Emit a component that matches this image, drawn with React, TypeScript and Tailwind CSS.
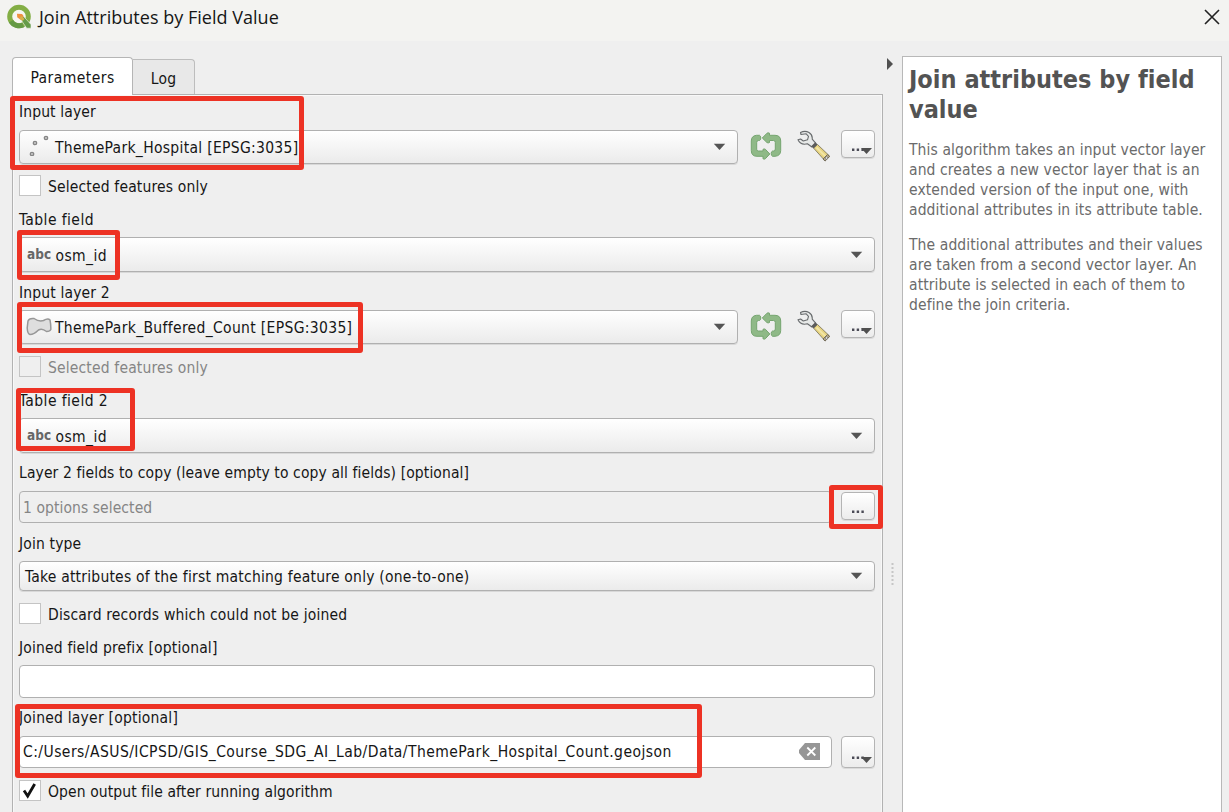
import type { ReactNode } from "react";

const FONT = "font-['DejaVu_Sans_Condensed','DejaVu_Sans',sans-serif] [font-stretch:condensed]";

function Label({ children, className = "" }: { children: ReactNode; className?: string }) {
  return (
    <div className={`flex h-5 shrink-0 items-center ${className}`}>
      <span className="mt-px">{children}</span>
    </div>
  );
}

function Arrow() {
  return (
    <svg width="13" height="8" viewBox="0 0 13 8" className="shrink-0">
      <path d="M.8.8h11.4L6.5 7Z" fill="#555" />
    </svg>
  );
}

function Combo({ children, className = "" }: { children: ReactNode; className?: string }) {
  return (
    <div className={`flex shrink-0 items-center justify-between rounded-[4px] border border-[#b0b0b0] bg-linear-to-b from-white to-[#ebebeb] pr-[11px] shadow-[0_1px_0_#d8d8d8] ${className}`}>
      <div className="flex items-center">{children}</div>
      <Arrow />
    </div>
  );
}

function Check({ text, checked, disabled, className = "" }: { text: string; checked?: boolean; disabled?: boolean; className?: string }) {
  return (
    <div className={`flex h-[21px] shrink-0 items-center gap-[7.5px] ${disabled ? "text-[#858585]" : ""} ${className}`}>
      <span className={`flex h-[21px] w-[21.5px] items-center justify-center border-[1.5px] border-[#c4c4c4] ${disabled ? "bg-[#efefef]" : "bg-white"}`}>
        {checked && (
          <svg width="15" height="17" viewBox="0 0 15 17">
            <path d="M2 8.5 5.7 14 12.7 2" fill="none" stroke="#111" strokeWidth="2.8" />
          </svg>
        )}
      </span>
      <span className="mt-[2px]">{text}</span>
    </div>
  );
}

function IterateIcon() {
  return (
    <svg width="32" height="28" viewBox="0 0 32 28">
      <g fill="#8fb987" stroke="#76a570" strokeLinejoin="round">
        <path d="M9.500 3.300H6.500Q1.300 3.800 1.300 9V18.500Q1.300 24.300 7 24.300H13V26.800Q14.500 27.500 15.400 26.700L19.800 22L15.400 17.300Q14.300 16.500 13 17.300V19H8.500Q6.700 19 6.700 17.300V10.500Q6.700 8.500 8.500 8.500H9.500Q10.800 8 10.800 6Q10.800 3.800 9.500 3.300Z" />
        <path d="M22.500 24.300H25Q30.700 23.800 30.700 18.500V9Q30.700 3.300 25 3.300H19.500V1.200Q18 .4 17 1.200L12.300 6L17 10.600Q18.200 11.300 19.500 10.500V8.500H23.500Q25.300 8.500 25.300 10.500V17Q25.300 19 23.500 19H22.500Q21.200 19.500 21.200 21.500Q21.200 23.800 22.500 24.300Z" />
      </g>
    </svg>
  );
}

function WrenchIcon() {
  return (
    <svg width="34" height="33" viewBox="0 0 34 33">
      <path d="M16.5 18 20.5 14.500 32.500 26 28 30.800Z" fill="#e8d582" stroke="#8d8568" strokeLinejoin="round" />
      <path d="m19.500 17.500 10 9.800" stroke="#f3e7a8" strokeWidth="1.8" />
      <path d="M26 29 30.500 24.500l2.200 2-4.700 4.600Z" fill="#b5a98a" stroke="#756d5b" />
      <circle cx="29.500" cy="28" r="1.2" fill="#eee" stroke="#666" strokeWidth=".6" />
      <path d="M3.500 2.500Q8 .2 12 2.500q3.800 2.400 3.200 6.600l3.700 4.200-4 3.700-4.500-3.200Q3.500 15.500 1 9.800l2.600-.8 2.700 2 4.200-1.200 1-3.500-2.300-2.500L4 4.500Z" fill="#e7e9e8" stroke="#686b6d" strokeWidth="1.1" strokeLinejoin="round" />
      <path d="m14 16.400 4.300-4.200 2.200 2.200-3.800 3.800Z" fill="#5c5c5c" />
    </svg>
  );
}

function DotsButton({ className = "", arrow = "" }: { className?: string; arrow?: string }) {
  return (
    <div className={`relative flex w-[34px] shrink-0 justify-center rounded-[4px] border border-[#b4b4b4] bg-linear-to-b from-white to-[#ececec] shadow-[0_1px_0_#dadada] ${className}`}>
      <svg width="14" height="4" viewBox="0 0 14 4">
        <path d="M1 .5h2.4v2.4H1zM5.7.5h2.4v2.4H5.7zM10.4.5h2.4v2.4h-2.4z" fill="#4b4b56" />
      </svg>
      {arrow && (
        <svg width="11" height="6" viewBox="0 0 11 6" className={`absolute right-[2px] ${arrow}`}>
          <path d="M0 0h11L5.5 6Z" fill="#505050" />
        </svg>
      )}
    </div>
  );
}

function LayerRow({ children, className = "" }: { children: ReactNode; className?: string }) {
  return (
    <div className={`flex h-[35px] shrink-0 ${className}`}>
      <Combo className="h-[34px] w-[719px]">{children}</Combo>
      <div className="ml-3 mt-[2px] shrink-0"><IterateIcon /></div>
      <div className="ml-[15px] shrink-0"><WrenchIcon /></div>
      <DotsButton className="ml-2.5 h-7 pt-[17px]" arrow="top-[17px]" />
    </div>
  );
}

function FieldCombo({ className = "" }: { className?: string }) {
  return (
    <Combo className={`h-[35px] ${className}`}>
      <span className="ml-[7px] mt-[-2px] w-[28.5px] text-[13.5px] font-bold text-[#666]">abc</span>
      <span className="mt-[2px] tracking-[0.4px]">osm_id</span>
    </Combo>
  );
}

function Marker({ className }: { className: string }) {
  return <div className={`absolute rounded-[3px] border-[5px] border-[#ed3224] ${className}`} />;
}

export default function App() {
  return (
    <div className={`relative flex h-[812px] w-[1229px] flex-col overflow-hidden bg-[#efefef] text-[15.5px] leading-5 text-[#161616] ${FONT}`}>
      <header className="flex h-[41px] shrink-0 items-center bg-[#f3f3f1] pb-[6px] pl-[6px] pr-[8px]">
        <svg width="26" height="26" viewBox="0 0 26 26" className="mt-[-2px]">
          <circle cx="13" cy="12.500" r="9.300" fill="#f6f6f1" stroke="#83ae45" strokeWidth="5" />
          <path d="M5 17.200A9.300 9.300 0 0 0 17 20.900" fill="none" stroke="#659a45" strokeWidth="5" />
          <path d="m14.500 15 3-2.700 7.500 8.200v3.700h-4.300Z" fill="#649b48" stroke="#f3f3f1" strokeWidth=".6" />
          <path d="m11 9.800 5 .3 1.200 1.300.2 4-2.900.4-3.300-2.500Z" fill="#ee913f" />
          <path d="m15.500 12 3 3-2 2-3-3Z" fill="#d8b24a" />
        </svg>
        <h1 className="ml-[7px] mt-[-2px] font-['Open_Sans','Noto_Sans',sans-serif] text-[18px] font-normal [font-stretch:normal] tracking-[0.02px]">Join Attributes by Field Value</h1>
        <svg width="18" height="18" viewBox="0 0 18 18" className="ml-auto mt-[-2px]">
          <path d="m2 2 14 14M16 2 2 16" stroke="#222" strokeWidth="1.6" />
        </svg>
      </header>

      <div className="flex min-h-0 flex-1">
        <main className="ml-3 mt-4 flex w-[871px] shrink-0 flex-col">
          <div className="z-10 flex h-[37px] shrink-0 items-end">
            <div className="mb-[-1px] flex h-[38px] w-[121px] items-center justify-center rounded-t-[4px] border border-b-0 border-[#b5b5b5] bg-white pt-[3px] tracking-[0.45px]">Parameters</div>
            <div className="flex h-[35px] w-[62px] items-center justify-center rounded-tr-[4px] border border-b-0 border-l-0 border-[#bdbdbd] bg-[#e8e8e8] pt-[4px] tracking-[0.2px]">Log</div>
          </div>
          <section className="flex min-h-0 flex-1 flex-col overflow-hidden border-x border-t border-[#b2b2b2] pl-[6px] pr-[7px] pt-[6px] shadow-[inset_1px_1px_0_#f8f8f8,inset_-1px_0_0_#f8f8f8]">
            <Label className="tracking-[0.12px]">Input layer</Label>
            <LayerRow className="mt-[9px]">
              <svg width="22" height="24" viewBox="0 0 22 24" className="ml-[9px] mr-[4px] mt-[-6px]">
                <g fill="#c8c8c8" stroke="#858585" strokeWidth="1.3">
                  <circle cx="6" cy="11" r="1.7" />
                  <circle cx="17" cy="6" r="1.7" />
                  <circle cx="3" cy="22" r="1.7" />
                </g>
              </svg>
              <span className="mt-[2px] tracking-[0.3px]">ThemePark_Hospital [EPSG:3035]</span>
            </LayerRow>
            <Check text="Selected features only" className="mt-[10px] tracking-[0.16px]" />
            <Label className="mt-[13px] tracking-[0.42px]">Table field</Label>
            <FieldCombo className="mt-2" />
            <Label className="mt-[10px] tracking-[0.15px]">Input layer 2</Label>
            <LayerRow className="mt-2">
              <svg width="26" height="19" viewBox="0 0 26 19" className="ml-[6px] mr-[3px] mt-[-2px]">
                <path d="M2 4Q3 1 8 1.500Q13 5 17.500 3.500Q22 .800 24 3Q25 8 24.800 12.500Q24 14.500 20.500 14.500Q16 10.800 12.500 13Q8 17.500 4 17.500Q1.500 17 1.200 11Z" fill="#dedede" stroke="#979797" strokeWidth="1.500" />
              </svg>
              <span className="mt-[2px] tracking-[0.33px]">ThemePark_Buffered_Count [EPSG:3035]</span>
            </LayerRow>
            <Check text="Selected features only" disabled className="mt-[11px] tracking-[0.16px]" />
            <Label className="mt-[13px] tracking-[0.42px]">Table field 2</Label>
            <FieldCombo className="mt-2" />
            <Label className="mt-[9px] tracking-[0.11px]">Layer 2 fields to copy (leave empty to copy all fields) [optional]</Label>
            <div className="mt-[9px] flex h-8 shrink-0 justify-between">
              <div className="flex w-[813px] items-center rounded-[4px] border border-[#b0b0b0] pl-[3px] pt-px tracking-[0.07px] text-[#858585]">1 options selected</div>
              <DotsButton className="mt-px h-7 pt-[17px]" />
            </div>
            <Label className="mt-[10px] tracking-[0.15px]">Join type</Label>
            <Combo className="mt-2 h-[30px] pl-[5px]">
              <span className="mt-px tracking-[0.22px]">Take attributes of the first matching feature only (one-to-one)</span>
            </Combo>
            <Check text="Discard records which could not be joined" className="mt-[12px] tracking-[0.18px]" />
            <Label className="mt-[13px] tracking-[0.17px]">Joined field prefix [optional]</Label>
            <div className="mt-2 h-[33px] shrink-0 rounded-[4px] border border-[#b0b0b0] bg-white" />
            <Label className="mt-[9px] tracking-[0.22px]">Joined layer [optional]</Label>
            <div className="mt-[9px] flex h-8 shrink-0 justify-between">
              <div className="flex w-[813px] items-center justify-between rounded-[4px] border border-[#b0b0b0] bg-white pl-[3px] pr-[11px]">
                <span className="tracking-[0.45px]">C:/Users/ASUS/ICPSD/GIS_Course_SDG_AI_Lab/Data/ThemePark_Hospital_Count.geojson</span>
                <svg width="21" height="17" viewBox="0 0 21 17" className="mt-[-2px]">
                  <path d="M6 0h15v17H6L0 10V7Z" fill="#969696" />
                  <path d="m8.300 4.500 8 8m0-8-8 8" stroke="#fff" strokeWidth="1.800" />
                </svg>
              </div>
              <DotsButton className="h-8 pt-[19px]" arrow="top-[20px]" />
            </div>
            <Check text="Open output file after running algorithm" checked className="mt-[12px] tracking-[0.1px]" />
          </section>
        </main>

        <div className="flex w-[19px] shrink-0 flex-col items-center">
          <svg width="8" height="14" viewBox="0 0 8 14" className="mr-[5px] mt-[16px]">
            <path d="M1 1v12l6-6Z" fill="#505050" />
          </svg>
          <svg width="3" height="22" viewBox="0 0 3 22" className="mt-[492px]">
            <path d="M1.500 0v22" stroke="#c6c6c6" strokeWidth="2" strokeDasharray="2 2" />
          </svg>
        </div>

        <aside className="mt-[15px] w-80 shrink-0 border border-b-0 border-[#b8b8b8] bg-white pl-[6px] pt-[8px] text-[#6b6b6b]">
          <h2 className="text-[25px] font-bold leading-[30px] tracking-[0.01px] text-[#535353]">
            Join attributes by field
            <br />
            value
          </h2>
          <p className="mt-[15px] whitespace-nowrap tracking-[0.1px]">
            This algorithm takes an input vector layer
            <br />
            and creates a new vector layer that is an
            <br />
            extended version of the input one, with
            <br />
            additional attributes in its attribute table.
          </p>
          <p className="mt-[15px] whitespace-nowrap tracking-[0.1px]">
            The additional attributes and their values
            <br />
            are taken from a second vector layer. An
            <br />
            attribute is selected in each of them to
            <br />
            define the join criteria.
          </p>
        </aside>
      </div>

      <Marker className="left-[10px] top-[96px] h-[74px] w-[294px]" />
      <Marker className="left-[17px] top-[230px] h-[50px] w-[103px]" />
      <Marker className="left-[17px] top-[302px] h-[51px] w-[346px]" />
      <Marker className="left-[16px] top-[388px] h-[63px] w-[119px]" />
      <Marker className="left-[829px] top-[485px] h-[44px] w-[54px]" />
      <Marker className="left-[15px] top-[704px] h-[74px] w-[687px]" />
    </div>
  );
}
